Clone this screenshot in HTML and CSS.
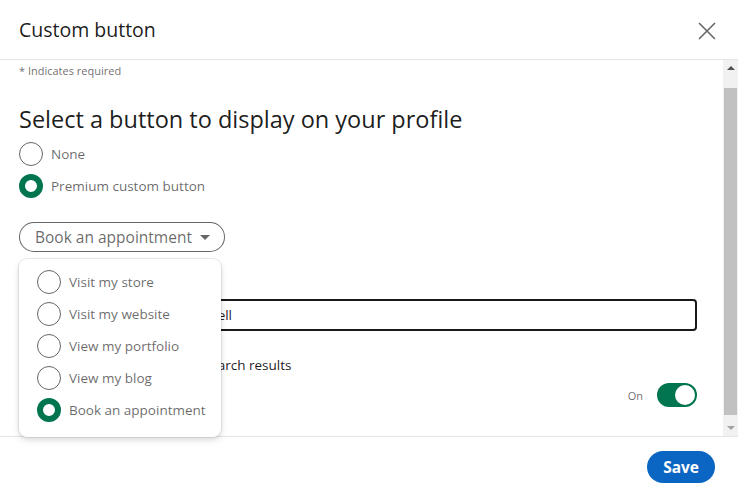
FILE: index.html
```html
<!DOCTYPE html>
<html>
<head>
<meta charset="utf-8">
<link rel="stylesheet" href="styles.css">
</head>
<body>
<div class="modal">
  <header class="head">
    <h1 class="title">Custom button</h1>
    <button class="close" aria-label="Dismiss">
      <svg width="18" height="18" viewBox="0 0 18 18"><path d="M1 1 L17 17 M17 1 L1 17" stroke="#666" stroke-width="1.6" fill="none"/></svg>
    </button>
  </header>
  <div class="body">
    <div class="scroll">
      <p class="req">* Indicates required</p>
      <h2 class="heading">Select a button to display on your profile</h2>
      <div class="radio-row"><span class="radio"></span><span class="rlabel">None</span></div>
      <div class="radio-row"><span class="radio on"></span><span class="rlabel">Premium custom button</span></div>
      <div class="dd-wrap">
        <button class="dd">Book an appointment <span class="caret"></span></button>
        <div class="menu">
          <div class="mitem"><span class="radio"></span><span class="mlabel">Visit my store</span></div>
          <div class="mitem"><span class="radio"></span><span class="mlabel">Visit my website</span></div>
          <div class="mitem"><span class="radio"></span><span class="mlabel">View my portfolio</span></div>
          <div class="mitem"><span class="radio"></span><span class="mlabel">View my blog</span></div>
          <div class="mitem"><span class="radio on"></span><span class="mlabel">Book an appointment</span></div>
        </div>
      </div>
      <div class="input">https://calendly.com/sk-mitchell</div>
      <p class="note">Display the custom button in search results</p>
      <div class="toggle-row">
        <span class="tstate">On</span>
        <span class="toggle"><span class="knob"></span></span>
      </div>
    </div>
    <div class="sbar">
      <span class="arrow up"></span>
      <span class="thumb"></span>
      <span class="arrow down"></span>
    </div>
  </div>
  <footer class="foot">
    <button class="save">Save</button>
  </footer>
</div>
</body>
</html>
```
FILE: styles.css
```css
* { box-sizing: border-box; }
html, body { margin: 0; padding: 0; background: #fff; }
body { font-family: "Open Sans", "Noto Sans", sans-serif; color: rgba(0,0,0,0.9); }
.modal { width: 738px; height: 496px; display: flex; flex-direction: column; overflow: hidden; }
.head { height: 60px; flex: none; display: flex; align-items: center; justify-content: space-between; padding: 0 22px 0 19px; border-bottom: 1px solid #e6e6e6; }
.title { margin: 0; font-size: 19.5px; font-weight: 400; line-height: 24px; color: rgba(0,0,0,0.9); padding-top: 1px; }
.close { border: 0; background: none; padding: 0; width: 18px; height: 18px; display: flex; margin-top: 2px; }
.body { flex: 1; display: flex; min-height: 0; border-bottom: 1px solid #e6e6e6; }
.scroll { flex: 1; padding: 4px 26px 0 19px; position: relative; }
.req { margin: 0; font-size: 11px; line-height: 14px; color: rgba(0,0,0,0.6); }
.heading { margin: 25px 0 3px; font-size: 23.5px; font-weight: 400; line-height: 32px; color: rgba(0,0,0,0.9); }
.radio-row { height: 32px; display: flex; align-items: center; gap: 8px; }
.radio { width: 24px; height: 24px; border-radius: 50%; border: 1px solid rgba(0,0,0,0.6); flex: none; }
.radio.on { border: 6px solid #01754f; }
.rlabel, .mlabel { font-size: 13.5px; color: rgba(0,0,0,0.6); }
.dd-wrap { position: relative; margin-top: 20px; }
.dd { height: 30px; border: 1px solid rgba(0,0,0,0.6); border-radius: 15px; background: #fff; font-family: inherit; font-size: 15.5px; color: rgba(0,0,0,0.6); padding: 0 14px 0 15px; display: flex; align-items: center; gap: 8px; }
.caret { width: 0; height: 0; border-left: 5px solid transparent; border-right: 5px solid transparent; border-top: 5px solid rgba(0,0,0,0.6); margin-top: 1px; }
.menu { position: absolute; left: 0; top: 37px; width: 202px; background: #fff; border-radius: 8px; box-shadow: 0 0 0 1px rgba(0,0,0,0.08), 0 3px 6px rgba(0,0,0,0.15); padding: 7px 0 11px 18px; z-index: 2; }
.mitem { height: 32px; display: flex; align-items: center; gap: 8px; }
.input { margin-top: 47px; height: 32px; border: 2px solid rgba(0,0,0,0.9); border-radius: 4px; padding: 0 10px; display: flex; align-items: center; font-size: 13.5px; color: rgba(0,0,0,0.9); }
.note { margin: 24px 0 0; font-size: 13.5px; line-height: 20px; color: rgba(0,0,0,0.9); }
.toggle-row { margin-top: 8px; height: 24px; display: flex; align-items: center; justify-content: flex-end; gap: 8px; }
.tstate { font-size: 11px; color: rgba(0,0,0,0.6); margin-right: 6px; }
.toggle { width: 40px; height: 24px; border-radius: 12px; background: #01754f; display: flex; align-items: center; justify-content: flex-end; padding: 2px; }
.knob { width: 20px; height: 20px; border-radius: 50%; background: #fff; }
.sbar { width: 15px; flex: none; background: #f1f1f1; display: flex; flex-direction: column; align-items: center; }
.arrow { width: 0; height: 0; border-left: 4px solid transparent; border-right: 4px solid transparent; flex: none; }
.arrow.up { border-bottom: 4px solid #505050; margin: 6px 0 0; }
.arrow.down { border-top: 4px solid #a3a3a3; margin: 0 0 6px; }
.thumb { width: 13px; flex: 1; background: #c1c1c1; margin: 18px 0 11px; }
.foot { height: 59px; flex: none; display: flex; align-items: center; justify-content: flex-end; padding: 0 23px 0 0; }
.save { height: 32px; padding: 0 16px; border: 0; border-radius: 16px; background: #0a66c2; color: #fff; font-family: inherit; font-size: 15.5px; font-weight: 700; margin-top: 1px; }
```
